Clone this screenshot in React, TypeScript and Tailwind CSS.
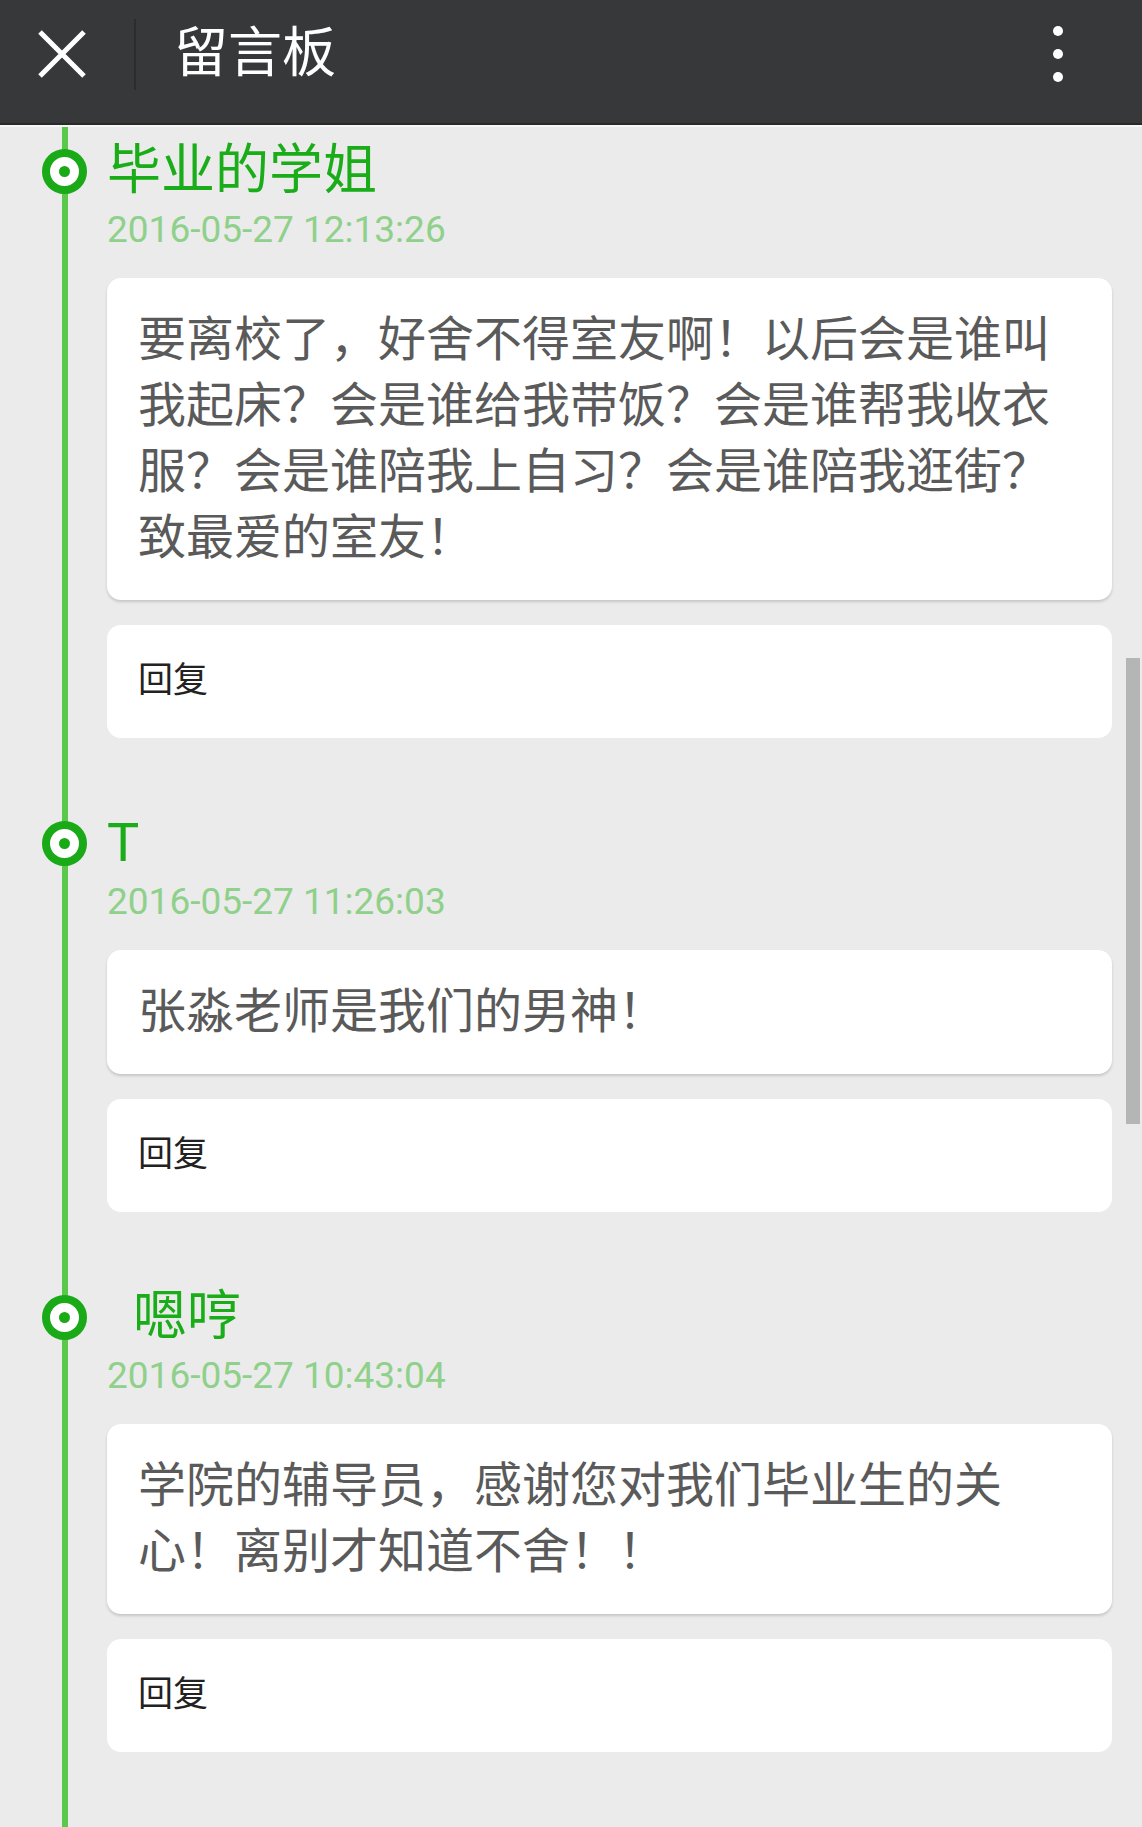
import React from "react";

type Message = {
	id: number;
	name: string;
	indent?: boolean;
	time: string;
	content: string;
};

const messages: Message[] = [
	{
		id: 1,
		name: "毕业的学姐",
		time: "2016-05-27 12:13:26",
		content:
			"要离校了，好舍不得室友啊！以后会是谁叫我起床？会是谁给我带饭？会是谁帮我收衣服？会是谁陪我上自习？会是谁陪我逛街？致最爱的室友！",
	},
	{
		id: 2,
		name: "T",
		time: "2016-05-27 11:26:03",
		content: "张淼老师是我们的男神！",
	},
	{
		id: 3,
		name: "嗯哼",
		indent: true,
		time: "2016-05-27 10:43:04",
		content: "学院的辅导员，感谢您对我们毕业生的关心！离别才知道不舍！！",
	},
];

const font = "font-['Roboto','Noto_Sans_CJK_SC',sans-serif]";

const TimelineDot = () => (
	<div className="absolute -left-[65px] top-[8px] flex h-[45px] w-[45px] items-center justify-center rounded-full border-[8px] border-[#1aa917] bg-white">
		<div className="h-[11px] w-[11px] rounded-full bg-[#1aa917]" />
	</div>
);

const MessageItem = ({ msg }: { msg: Message }) => (
	<div className="relative mb-[75px]">
		<TimelineDot />
		<div
			className={`text-[54px] leading-[60px] text-[#1aad19] ${msg.indent ? "pl-[26px]" : ""}`}
		>
			{msg.name}
		</div>
		<div className="mt-[8px] text-[37px] leading-[42px] text-[#8fd08a]">
			{msg.time}
		</div>
		<div className="mt-[27px] rounded-[14px] bg-white px-[31px] py-[29px] text-[48px] leading-[66px] text-[#5a5a5a] shadow-[0_2px_3px_rgba(0,0,0,0.16)]">
			{msg.content}
		</div>
		<button
			type="button"
			className="mt-[25px] flex h-[113px] w-full items-center rounded-[14px] bg-white pl-[31px] text-[35px] text-[#222]"
		>
			回复
		</button>
	</div>
);

export default function App() {
	return (
		<div className={`relative min-h-screen w-[1142px] bg-[#ebebeb] ${font}`}>
			<header className="h-[125px] border-b-[2px] border-[#2a2a2b] bg-[#37383a]">
				<div className="flex h-[108px] items-center">
					<button type="button" className="ml-[38px] flex h-[48px] w-[48px] items-center justify-center">
						<svg width="48" height="48" viewBox="0 0 48 48">
							<path d="M2 2 L46 46 M46 2 L2 46" stroke="#fff" strokeWidth="5" strokeLinecap="butt" />
						</svg>
					</button>
					<div className="ml-[48px] h-[71px] w-[2px] bg-[#2c2c2e]" />
					<h1 className="ml-[38px] text-[54px] leading-none text-white">留言板</h1>
					<div className="ml-auto mr-[79px] flex flex-col gap-[13px]">
						<span className="h-[10px] w-[10px] rounded-full bg-white" />
						<span className="h-[10px] w-[10px] rounded-full bg-white" />
						<span className="h-[10px] w-[10px] rounded-full bg-white" />
					</div>
				</div>
			</header>
			<div className="h-[2px] bg-[#f7f7f7]" />

			<main className="ml-[62px] min-h-[1700px] border-l-[6px] border-[#5ac94b] pl-[39px] pr-[30px] pt-[14px]">
				{messages.map((msg) => (
					<MessageItem key={msg.id} msg={msg} />
				))}
			</main>

			<div className="absolute right-[2px] top-[658px] h-[466px] w-[14px] bg-[#b4b6b5]" />
		</div>
	);
}
